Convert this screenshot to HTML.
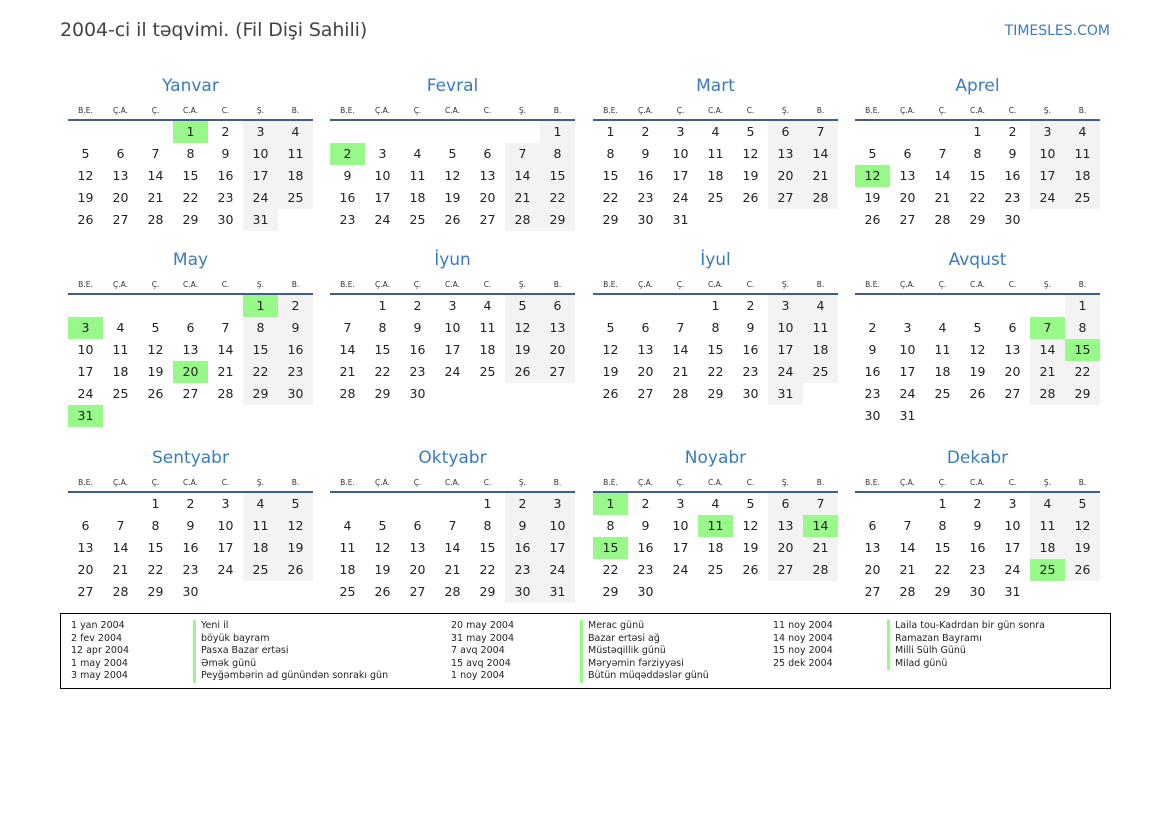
<!DOCTYPE html>
<html><head><meta charset="utf-8"><style>
*{margin:0;padding:0;box-sizing:border-box}
body{width:1169px;height:827px;background:#fff;position:relative;font-family:"DejaVu Sans","Liberation Sans",sans-serif;color:#222;overflow:hidden}
.t{position:absolute;left:60px;top:19px;font-size:19px;color:#444;letter-spacing:-0.1px}
.logo{position:absolute;right:59px;top:23px;font-size:14px;color:#3a7bbf}
.m{position:absolute;width:245px}
.m h2{height:30px;line-height:30px;text-align:center;font-weight:normal;font-size:17px;color:#3a7bbf}
.hd{display:grid;grid-template-columns:repeat(7,35px);height:20px;line-height:20px;font-size:7.5px;text-align:center;color:#333;border-bottom:2px solid #3d5f8f}
.g{display:grid;grid-template-columns:repeat(7,35px);grid-auto-rows:22px}
.g i{font-style:normal;text-align:center;line-height:22px;font-size:12.5px}
.g i:nth-child(7n+6),.g i:nth-child(7n){background:#f3f3f3}
.g i.e{background:none!important}
.g i.h{background:#98f98a!important}
.leg{position:absolute;left:60px;top:613px;width:1051px;height:76px;border:1px solid #000;font-size:9.5px;color:#222}
.leg div{position:absolute;top:6px;line-height:12.6px;white-space:nowrap}
.bar{border-left:3px solid #98f98a;padding-left:5px}
</style></head><body>
<div class="t">2004-ci il təqvimi. (Fil Dişi Sahili)</div>
<div class="logo">TIMESLES.COM</div>

<div class="m" style="left:68px;top:71px"><h2>Yanvar</h2><div class="hd"><span>B.E.</span><span>Ç.A.</span><span>Ç.</span><span>C.A.</span><span>C.</span><span>Ş.</span><span>B.</span></div><div class="g"><i class="e"></i><i class="e"></i><i class="e"></i><i class="h">1</i><i>2</i><i>3</i><i>4</i><i>5</i><i>6</i><i>7</i><i>8</i><i>9</i><i>10</i><i>11</i><i>12</i><i>13</i><i>14</i><i>15</i><i>16</i><i>17</i><i>18</i><i>19</i><i>20</i><i>21</i><i>22</i><i>23</i><i>24</i><i>25</i><i>26</i><i>27</i><i>28</i><i>29</i><i>30</i><i>31</i></div></div>

<div class="m" style="left:330px;top:71px"><h2>Fevral</h2><div class="hd"><span>B.E.</span><span>Ç.A.</span><span>Ç.</span><span>C.A.</span><span>C.</span><span>Ş.</span><span>B.</span></div><div class="g"><i class="e"></i><i class="e"></i><i class="e"></i><i class="e"></i><i class="e"></i><i class="e"></i><i>1</i><i class="h">2</i><i>3</i><i>4</i><i>5</i><i>6</i><i>7</i><i>8</i><i>9</i><i>10</i><i>11</i><i>12</i><i>13</i><i>14</i><i>15</i><i>16</i><i>17</i><i>18</i><i>19</i><i>20</i><i>21</i><i>22</i><i>23</i><i>24</i><i>25</i><i>26</i><i>27</i><i>28</i><i>29</i></div></div>

<div class="m" style="left:593px;top:71px"><h2>Mart</h2><div class="hd"><span>B.E.</span><span>Ç.A.</span><span>Ç.</span><span>C.A.</span><span>C.</span><span>Ş.</span><span>B.</span></div><div class="g"><i>1</i><i>2</i><i>3</i><i>4</i><i>5</i><i>6</i><i>7</i><i>8</i><i>9</i><i>10</i><i>11</i><i>12</i><i>13</i><i>14</i><i>15</i><i>16</i><i>17</i><i>18</i><i>19</i><i>20</i><i>21</i><i>22</i><i>23</i><i>24</i><i>25</i><i>26</i><i>27</i><i>28</i><i>29</i><i>30</i><i>31</i></div></div>

<div class="m" style="left:855px;top:71px"><h2>Aprel</h2><div class="hd"><span>B.E.</span><span>Ç.A.</span><span>Ç.</span><span>C.A.</span><span>C.</span><span>Ş.</span><span>B.</span></div><div class="g"><i class="e"></i><i class="e"></i><i class="e"></i><i>1</i><i>2</i><i>3</i><i>4</i><i>5</i><i>6</i><i>7</i><i>8</i><i>9</i><i>10</i><i>11</i><i class="h">12</i><i>13</i><i>14</i><i>15</i><i>16</i><i>17</i><i>18</i><i>19</i><i>20</i><i>21</i><i>22</i><i>23</i><i>24</i><i>25</i><i>26</i><i>27</i><i>28</i><i>29</i><i>30</i></div></div>

<div class="m" style="left:68px;top:245px"><h2>May</h2><div class="hd"><span>B.E.</span><span>Ç.A.</span><span>Ç.</span><span>C.A.</span><span>C.</span><span>Ş.</span><span>B.</span></div><div class="g"><i class="e"></i><i class="e"></i><i class="e"></i><i class="e"></i><i class="e"></i><i class="h">1</i><i>2</i><i class="h">3</i><i>4</i><i>5</i><i>6</i><i>7</i><i>8</i><i>9</i><i>10</i><i>11</i><i>12</i><i>13</i><i>14</i><i>15</i><i>16</i><i>17</i><i>18</i><i>19</i><i class="h">20</i><i>21</i><i>22</i><i>23</i><i>24</i><i>25</i><i>26</i><i>27</i><i>28</i><i>29</i><i>30</i><i class="h">31</i></div></div>

<div class="m" style="left:330px;top:245px"><h2>İyun</h2><div class="hd"><span>B.E.</span><span>Ç.A.</span><span>Ç.</span><span>C.A.</span><span>C.</span><span>Ş.</span><span>B.</span></div><div class="g"><i class="e"></i><i>1</i><i>2</i><i>3</i><i>4</i><i>5</i><i>6</i><i>7</i><i>8</i><i>9</i><i>10</i><i>11</i><i>12</i><i>13</i><i>14</i><i>15</i><i>16</i><i>17</i><i>18</i><i>19</i><i>20</i><i>21</i><i>22</i><i>23</i><i>24</i><i>25</i><i>26</i><i>27</i><i>28</i><i>29</i><i>30</i></div></div>

<div class="m" style="left:593px;top:245px"><h2>İyul</h2><div class="hd"><span>B.E.</span><span>Ç.A.</span><span>Ç.</span><span>C.A.</span><span>C.</span><span>Ş.</span><span>B.</span></div><div class="g"><i class="e"></i><i class="e"></i><i class="e"></i><i>1</i><i>2</i><i>3</i><i>4</i><i>5</i><i>6</i><i>7</i><i>8</i><i>9</i><i>10</i><i>11</i><i>12</i><i>13</i><i>14</i><i>15</i><i>16</i><i>17</i><i>18</i><i>19</i><i>20</i><i>21</i><i>22</i><i>23</i><i>24</i><i>25</i><i>26</i><i>27</i><i>28</i><i>29</i><i>30</i><i>31</i></div></div>

<div class="m" style="left:855px;top:245px"><h2>Avqust</h2><div class="hd"><span>B.E.</span><span>Ç.A.</span><span>Ç.</span><span>C.A.</span><span>C.</span><span>Ş.</span><span>B.</span></div><div class="g"><i class="e"></i><i class="e"></i><i class="e"></i><i class="e"></i><i class="e"></i><i class="e"></i><i>1</i><i>2</i><i>3</i><i>4</i><i>5</i><i>6</i><i class="h">7</i><i>8</i><i>9</i><i>10</i><i>11</i><i>12</i><i>13</i><i>14</i><i class="h">15</i><i>16</i><i>17</i><i>18</i><i>19</i><i>20</i><i>21</i><i>22</i><i>23</i><i>24</i><i>25</i><i>26</i><i>27</i><i>28</i><i>29</i><i>30</i><i>31</i></div></div>

<div class="m" style="left:68px;top:443px"><h2>Sentyabr</h2><div class="hd"><span>B.E.</span><span>Ç.A.</span><span>Ç.</span><span>C.A.</span><span>C.</span><span>Ş.</span><span>B.</span></div><div class="g"><i class="e"></i><i class="e"></i><i>1</i><i>2</i><i>3</i><i>4</i><i>5</i><i>6</i><i>7</i><i>8</i><i>9</i><i>10</i><i>11</i><i>12</i><i>13</i><i>14</i><i>15</i><i>16</i><i>17</i><i>18</i><i>19</i><i>20</i><i>21</i><i>22</i><i>23</i><i>24</i><i>25</i><i>26</i><i>27</i><i>28</i><i>29</i><i>30</i></div></div>

<div class="m" style="left:330px;top:443px"><h2>Oktyabr</h2><div class="hd"><span>B.E.</span><span>Ç.A.</span><span>Ç.</span><span>C.A.</span><span>C.</span><span>Ş.</span><span>B.</span></div><div class="g"><i class="e"></i><i class="e"></i><i class="e"></i><i class="e"></i><i>1</i><i>2</i><i>3</i><i>4</i><i>5</i><i>6</i><i>7</i><i>8</i><i>9</i><i>10</i><i>11</i><i>12</i><i>13</i><i>14</i><i>15</i><i>16</i><i>17</i><i>18</i><i>19</i><i>20</i><i>21</i><i>22</i><i>23</i><i>24</i><i>25</i><i>26</i><i>27</i><i>28</i><i>29</i><i>30</i><i>31</i></div></div>

<div class="m" style="left:593px;top:443px"><h2>Noyabr</h2><div class="hd"><span>B.E.</span><span>Ç.A.</span><span>Ç.</span><span>C.A.</span><span>C.</span><span>Ş.</span><span>B.</span></div><div class="g"><i class="h">1</i><i>2</i><i>3</i><i>4</i><i>5</i><i>6</i><i>7</i><i>8</i><i>9</i><i>10</i><i class="h">11</i><i>12</i><i>13</i><i class="h">14</i><i class="h">15</i><i>16</i><i>17</i><i>18</i><i>19</i><i>20</i><i>21</i><i>22</i><i>23</i><i>24</i><i>25</i><i>26</i><i>27</i><i>28</i><i>29</i><i>30</i></div></div>

<div class="m" style="left:855px;top:443px"><h2>Dekabr</h2><div class="hd"><span>B.E.</span><span>Ç.A.</span><span>Ç.</span><span>C.A.</span><span>C.</span><span>Ş.</span><span>B.</span></div><div class="g"><i class="e"></i><i class="e"></i><i>1</i><i>2</i><i>3</i><i>4</i><i>5</i><i>6</i><i>7</i><i>8</i><i>9</i><i>10</i><i>11</i><i>12</i><i>13</i><i>14</i><i>15</i><i>16</i><i>17</i><i>18</i><i>19</i><i>20</i><i>21</i><i>22</i><i>23</i><i>24</i><i class="h">25</i><i>26</i><i>27</i><i>28</i><i>29</i><i>30</i><i>31</i></div></div>

<div class="leg">
<div style="left:10px">1 yan 2004<br>2 fev 2004<br>12 apr 2004<br>1 may 2004<br>3 may 2004</div>
<div style="left:132px" class="bar">Yeni il<br>böyük bayram<br>Pasxa Bazar ertəsi<br>Əmək günü<br>Peyğəmbərin ad günündən sonrakı gün</div>
<div style="left:390px">20 may 2004<br>31 may 2004<br>7 avq 2004<br>15 avq 2004<br>1 noy 2004</div>
<div style="left:519px" class="bar">Merac günü<br>Bazar ertəsi ağ<br>Müstəqillik günü<br>Məryəmin fərziyyəsi<br>Bütün müqəddəslər günü</div>
<div style="left:712px">11 noy 2004<br>14 noy 2004<br>15 noy 2004<br>25 dek 2004</div>
<div style="left:826px" class="bar">Laila tou-Kadrdan bir gün sonra<br>Ramazan Bayramı<br>Milli Sülh Günü<br>Milad günü</div>
</div>
</body></html>
